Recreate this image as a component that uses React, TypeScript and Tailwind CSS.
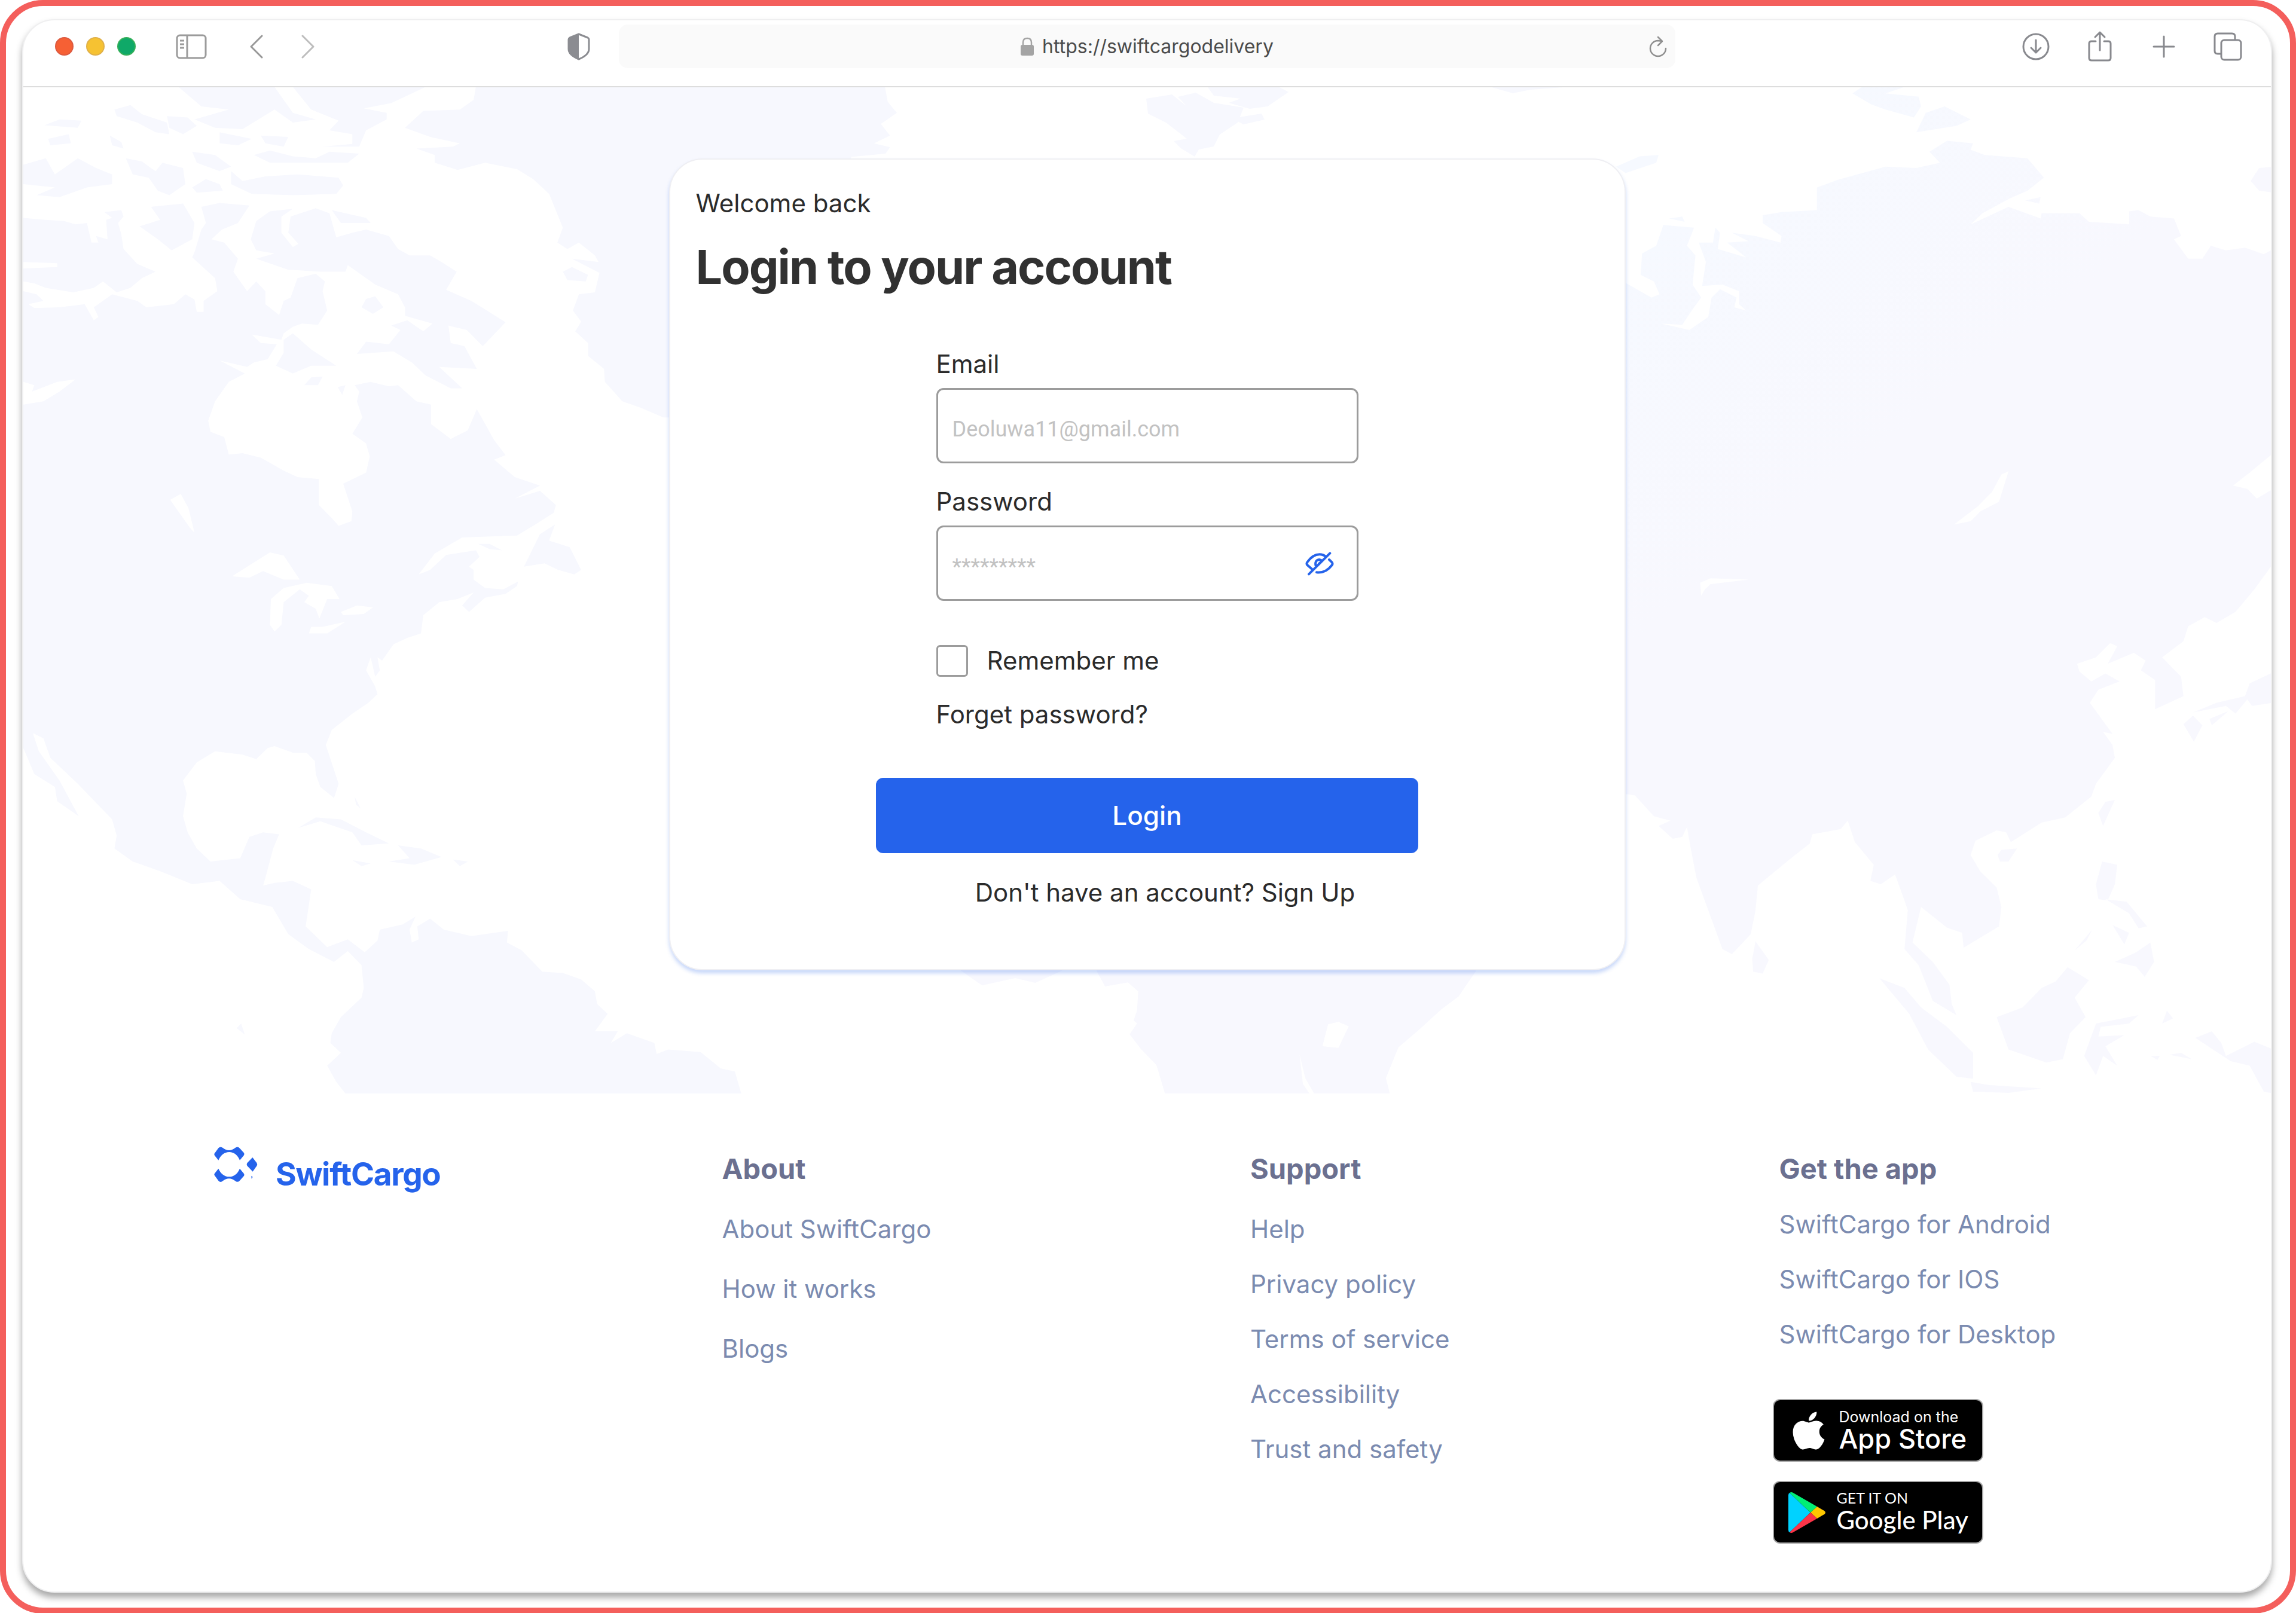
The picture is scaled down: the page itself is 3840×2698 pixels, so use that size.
import { useState } from "react";
import type { ReactNode } from "react";
import { FaApple } from "react-icons/fa";

type LinkColumn = {
  title: string;
  links: string[];
};

const aboutColumn: LinkColumn = {
  title: "About",
  links: ["About SwiftCargo", "How it works", "Blogs"],
};

const supportColumn: LinkColumn = {
  title: "Support",
  links: [
    "Help",
    "Privacy policy",
    "Terms of service",
    "Accessibility",
    "Trust and safety",
  ],
};

const appColumn: LinkColumn = {
  title: "Get the app",
  links: [
    "SwiftCargo for Android",
    "SwiftCargo for IOS",
    "SwiftCargo for Desktop",
  ],
};

function WorldMap() {
  return (
    <svg
      aria-hidden="true"
      viewBox="39 146 3759 1683"
      preserveAspectRatio="xMidYMid slice"
      className="absolute inset-0 h-full w-full"
    >
      <defs>
        <linearGradient
          id="asia"
          gradientUnits="userSpaceOnUse"
          x1="150"
          y1="250"
          x2="420"
          y2="720"
        >
          <stop offset="0" stopColor="#f6f9ff" />
          <stop offset="1" stopColor="#f8f8fe" />
        </linearGradient>
      </defs>

      {/* Americas and Greenland */}
      <g
        transform="translate(0 140) scale(.7653 1.0842)"
        fill="#f7f8fe"
        fillRule="evenodd"
      >
        <path
          d="M51 320 80 325 95 335 62 340 75 346 130 345 185 340 205 365 215 360 205 345 245 325 300 335 320 345 380 340 405 325 425 333 430 352 445 352 445 335 475 320 470 300 420 268 425 260 440 225 450 215 440 190 480 184 545 188 520 215 485 225 462 240 490 245 520 270 510 290 540 320 560 305 580 320 580 340 610 357 620 335 635 330 650 300 690 293 710 305 705 320 715 350 695 372 660 370 640 375 620 385 615 395 550 387 570 400 605 402 585 425 555 430 540 437 480 427 535 447 500 460 470 490 455 520 460 537 490 545 500 572 530 570 570 577 620 597 650 607 697 610 697 650 725 670 740 682 768 675 770 660 750 617 800 600 808 575 800 555 770 540 792 515 780 490 785 475 775 465 810 460 850 467 870 465 910 490 942 495 942 525 985 548 1022 535 1042 502 1080 550 1105 573 1080 580 1125 607 1180 620 1125 640 1180 628 1215 650 1210 662 1170 680 1130 697 1010 700 950 725 915 757 940 750 975 727 1040 720 1048 730 1025 745 1035 750 1035 765 1060 778 1100 780 1132 768 1130 775 1105 787 1060 793 1025 815 1010 805 1035 785 1000 795 960 800 925 820 920 848 890 855 860 865 835 890 825 885 830 905 820 915 810 885 800 905 820 930 825 942 805 955 770 972 725 997 712 1020 740 1080 730 1102 700 1085 690 1065 688 1045 670 1032 640 1032 600 1022 585 1025 560 1042 530 1035 470 1030 430 1047 400 1075 408 1095 400 1130 410 1155 430 1180 460 1200 525 1195 545 1162 575 1155 610 1158 597 1180 580 1225 575 1237 600 1233 640 1230 680 1243 668 1300 715 1332 760 1320 797 1340 825 1322 830 1305 880 1297 908 1285 895 1305 900 1325 915 1320 912 1300 940 1288 970 1305 1030 1315 1110 1307 1108 1325 1140 1337 1185 1370 1230 1372 1270 1382 1300 1400 1305 1420 1328 1435 1300 1462 1350 1462 1335 1480 1370 1465 1430 1480 1435 1497 1460 1490 1531 1494 1575 1519 1606 1524 1620 1558 755 1558 735 1540 715 1515 745 1495 722 1480 725 1465 745 1440 790 1410 795 1395 790 1360 760 1338 730 1355 675 1335 630 1312 595 1270 525 1258 480 1230 420 1235 350 1215 290 1200 250 1180 255 1160 245 1135 170 1080 110 1040 95 1010 72 1002 85 1030 130 1075 172 1130 125 1107 120 1085 75 1065 51 1025Z
          M51 460 75 465 70 475 125 460 165 456 130 475 95 490 51 495Z
          M372 642 395 633 412 655 425 693 415 685 385 655Z
          M507 760 545 743 590 723 620 728 655 765 620 765 575 752 545 762Z
          M590 835 592 795 620 778 670 770 725 775 742 795 715 795 698 825 690 810 665 800 675 790 655 780 620 800 615 835 600 845Z
          M745 815 780 805 815 808 795 818 750 820Z
          M675 848 680 838 705 838 755 830 715 848Z"
        />
        <path d="M51 207 100 210 140 212 165 217 190 215 200 245 215 245 210 235 235 240 232 210 245 207 228 198 265 195 270 205 258 215 265 232 270 255 300 278 340 290 310 300 285 315 255 322 225 305 205 315 160 322 100 315 75 308 51 305 51 285 125 283 125 277 51 275Z" />
        <path d="M1040 5 1035 25 1005 40 925 42 885 68 940 82 1005 92 990 97 910 100 950 110 950 122 1000 133 1060 122 1130 132 1165 147 1200 170 1230 222 1218 245 1240 255 1265 245 1300 265 1308 275 1250 270 1310 292 1300 322 1265 325 1252 350 1270 367 1257 382 1285 400 1285 420 1320 440 1322 460 1360 490 1400 500 1450 515 1600 515 1860 300 1860 113 1935 108 1945 98 1910 92 1945 80 1925 62 1960 45 1940 28 1934 5Z" />
        <path d="M548 240 560 212 590 197 640 193 615 205 615 230 640 252 652 247 630 230 635 205 690 192 720 200 735 237 770 230 800 225 850 235 870 255 895 265 940 265 965 275 998 290 975 318 1030 335 1105 368 1055 405 1020 380 980 373 985 400 1015 405 1042 440 960 437 1010 470 985 470 930 450 900 430 860 413 780 417 800 398 850 402 875 380 855 373 890 365 925 382 945 370 885 358 885 345 870 325 820 310 760 280 755 290 700 290 630 287 560 270 600 262 560 257Z" />
        <path
          d="M725 195 800 207 810 215 745 215Z
          M505 135 530 150 580 143 650 140 740 145 750 157 735 170 640 172 550 170 505 155Z
          M420 160 450 147 480 155 487 165 430 168Z
          M420 105 470 110 505 128 480 135 430 122Z
          M555 110 590 103 640 112 690 115 720 105 785 108 760 122 640 122 590 122Z
          M640 5 930 5 855 30 795 38 845 45 845 55 800 72 785 97 705 97 770 93 770 78 720 72 740 57 680 40Z
          M390 5 600 5 640 45 690 55 640 60 600 40 530 70 470 68 425 55 500 40 440 35Z
          M250 40 285 33 310 47 365 60 370 78 340 75 300 60 255 50Z
          M365 50 410 52 430 65 400 78 370 68Z
          M240 80 265 90 270 100 245 95Z
          M97 64 130 55 178 57 170 68Z
          M105 85 150 78 155 92 110 95Z
          M51 125 100 115 120 140 170 115 210 130 245 140 245 155 190 160 130 175 80 172 120 160 51 155Z
          M275 115 310 120 340 135 355 122 400 130 405 155 370 172 345 165 325 145 290 140Z
          M305 220 350 210 330 190 400 185 425 215 420 240 375 257 345 240Z
          M480 75 550 85 520 95 480 92Z
          M570 80 630 82 620 97 580 92Z
          M790 345 800 332 820 328 838 345 815 355Z
          M1230 290 1250 283 1285 295 1280 305 1240 303Z
          M603 435 620 415 620 395 640 385 680 410 735 435 680 435 640 447Z
          M665 465 680 453 705 452 695 465Z
          M738 468 755 465 748 480Z
          M1145 745 1180 695 1213 680 1200 705 1245 715 1270 750 1255 757 1220 750 1190 740Z
          M1045 710 1070 710 1097 720 1070 718Z
          M652 1148 690 1132 745 1135 800 1155 850 1172 790 1175 770 1155 700 1138Z
          M870 1175 920 1180 965 1193 905 1205 850 1200 895 1195Z
          M770 1198 810 1203 790 1207Z
          M990 1197 1023 1200 1005 1207Z
          M517 1457 527 1450 535 1467Z
          M775 1100 788 1118 778 1112Z"
        />
      </g>

      {/* Arctic islands */}
      <path
        fill="#f7f8fe"
        d="M2020 146H2140L2155 154 2120 178 2090 182 2055 172 2075 165 2030 160Z
        M1917 165 1960 158 1985 178 1970 162 2000 155 2030 172 2080 180 2070 205 2040 225 2030 245 2005 250 1998 262 1975 248 1963 236 1985 232 1950 205 1920 190Z
        M2060 198 2110 190 2115 200 2080 208Z
        M2495 146H2615L2560 150 2530 156Z"
      />

      {/* Africa */}
      <path
        transform="translate(1100 1600) scale(.9567 .3333)"
        fill="#f8f8fe"
        fillRule="evenodd"
        d="M765 60 782 150 822 130 840 175 838 270 832 320 838 335 825 390 845 465 872 545 887 690 1140 690 1128 640 1122 490 1132 610 1148 690 1280 690 1273 610 1295 455 1330 370 1370 265 1400 200 1430 75 1430 60Z
        M1162 450 1172 340 1190 328 1208 350 1190 458Z
        M525 60 567 145 625 108 660 132 715 60Z"
      />

      {/* Asia */}
      <g
        transform="translate(2600 140) scale(.7908 1.0842)"
        fill="url(#asia)"
        fillRule="evenodd"
      >
        <path
          d="M0 290 152 308 205 330 222 325 210 305 182 295 185 262 215 250 230 218 295 222 280 250 298 265 292 310 310 330 290 350 270 372 225 370 285 380 325 360 332 330 350 317 385 330 380 345 405 350 390 340 390 320 355 310 312 312 320 275 305 245 335 245 340 222 350 230 345 255 405 268 365 245 410 243 375 230 425 235 478 245 480 235 440 215 440 203 480 198 555 195 555 160 600 148 700 128 765 130 815 122 793 105 830 88 885 92 880 102 910 110 1000 115 1035 145 1000 165 960 178 905 200 880 217 960 190 1028 208 1030 200 1110 200 1130 213 1215 217 1215 197 1235 195 1260 205 1310 208 1325 235 1310 240 1340 270 1370 270 1388 250 1420 257 1460 253 1500 263 1520 255 1520 570 1470 600 1435 620 1465 625 1485 640 1520 625 1520 740 1480 780 1440 815 1400 832 1375 823 1340 837 1330 860 1285 885 1325 915 1330 945 1270 965 1270 920 1240 905 1250 890 1225 878 1170 895 1190 868 1175 863 1145 885 1105 895 1110 907 1135 922 1165 910 1195 922 1150 935 1132 955 1180 1003 1160 1000 1180 1020 1185 1040 1145 1080 1135 1100 1080 1132 1030 1140 965 1170 955 1155 935 1152 890 1168 880 1190 900 1215 935 1240 945 1270 940 1300 865 1333 862 1310 830 1302 775 1270 757 1325 800 1355 835 1390 840 1420 850 1437 800 1415 770 1360 740 1335 747 1275 735 1250 720 1220 690 1235 668 1230 675 1205 635 1170 620 1137 605 1150 545 1158 540 1172 500 1195 430 1237 425 1275 415 1312 375 1343 355 1335 330 1285 300 1225 288 1180 280 1147 270 1162 250 1165 220 1145 245 1137 210 1130 170 1098 0 1080Z
          M845 680 895 652 925 630 945 603 960 598 940 645 900 660 880 675Z
          M310 790 308 770 330 763 410 765 330 772 318 780Z"
        />
        <path
          d="M630 15 650 5 740 5 700 15 770 20 775 35 760 52 700 40 670 32Z
          M765 75 785 45 825 35 880 55 850 65Z
          M130 128 180 112 220 110 215 122 150 138Z
          M242 208 270 205 275 213Z
          M1472 150 1490 130 1520 128 1520 168 1490 165Z
          M995 180 1028 175 1025 185Z
          M1350 970 1400 955 1460 945 1470 925 1520 908 1520 955 1475 960 1465 950 1440 972 1420 960Z
          M1330 988 1350 975 1370 990 1352 1015Z
          M1385 980 1425 968 1390 990Z
          M1150 1125 1165 1108 1185 1105 1160 1145Z
          M937 1190 945 1182 978 1180 960 1200 942 1200Z
          M418 1350 425 1323 453 1352 440 1373 420 1370Z
          M1145 1235 1158 1200 1190 1205 1185 1235 1170 1260 1150 1258Z
          M1165 1258 1210 1262 1253 1300 1235 1303 1215 1280Z
          M1180 1298 1215 1310 1205 1328Z
          M1185 1355 1230 1340 1260 1325 1268 1355 1248 1378 1230 1362Z
          M1100 1337 1137 1305 1125 1322Z
          M687 1380 740 1395 775 1425 830 1455 885 1495 885 1535 850 1532 790 1490 750 1435Z
          M880 1540 920 1545 1030 1550 960 1557 885 1555Z
          M935 1440 990 1425 1030 1395 1060 1385 1085 1363 1130 1383 1100 1410 1123 1440 1090 1465 1075 1505 1040 1510 960 1490Z
          M1120 1500 1145 1450 1235 1437 1215 1450 1155 1455 1150 1470 1205 1468 1165 1485 1190 1515 1160 1500 1145 1530Z
          M1355 1472 1390 1462 1410 1480 1420 1500 1480 1478 1520 1490 1520 1558 1500 1555 1470 1515 1430 1508Z
          M1285 1450 1295 1430 1308 1442Z
          M1260 1500 1280 1500 1275 1506Z
          M1300 1498 1325 1495 1348 1505Z"
        />
      </g>
    </svg>
  );
}

function ToolbarButton({
  label,
  children,
}: {
  label: string;
  children: ReactNode;
}) {
  return (
    <button
      type="button"
      aria-label={label}
      className="flex min-w-6 cursor-pointer justify-center"
    >
      {children}
    </button>
  );
}

function BrowserToolbar() {
  return (
    <header className="grid h-28 grid-cols-[1fr_47%_1fr] items-start border-b-2 border-[#dddddd] pt-[7px]">
      <div className="flex h-[73px] items-center pr-12 pl-[53px]">
        <div className="flex gap-[21px]">
          <span className="size-[31px] rounded-full border-2 border-[#dc5a40] bg-[#f66034]" />
          <span className="size-[31px] rounded-full border-2 border-[#dfb04a] bg-[#f6c232]" />
          <span className="size-[31px] rounded-full border-2 border-[#37b05a] bg-[#0fa968]" />
        </div>
        <div className="ml-[67px] flex items-center">
          <ToolbarButton label="Show sidebar">
            <svg
              width="52"
              height="42"
              viewBox="0 0 52 42"
              fill="none"
              stroke="#9b9b9b"
              strokeWidth="3"
            >
              <rect x="2" y="2" width="48" height="38" rx="5" />
              <path d="M19 2v38M7 11h7M7 17h7M7 23h7" />
            </svg>
          </ToolbarButton>
          <div className="ml-[71px] flex gap-[62px]">
            <ToolbarButton label="Back">
              <svg
                width="22"
                height="40"
                viewBox="0 0 22 40"
                fill="none"
                stroke="#999999"
                strokeWidth="3"
                strokeLinecap="round"
                strokeLinejoin="round"
              >
                <path d="M20 2 2 20l18 18" />
              </svg>
            </ToolbarButton>
            <ToolbarButton label="Forward">
              <svg
                width="22"
                height="40"
                viewBox="0 0 22 40"
                fill="none"
                stroke="#bdbdbd"
                strokeWidth="3"
                strokeLinecap="round"
                strokeLinejoin="round"
              >
                <path d="m2 2 18 18L2 38" />
              </svg>
            </ToolbarButton>
          </div>
        </div>
        <div className="ml-auto flex">
          <ToolbarButton label="Privacy report">
            <svg width="38" height="46" viewBox="0 0 38 46">
              <path
                d="M19 2 34 8q2 1 2 3v16q0 10-17 17Q2 37 2 27V11q0-2 2-3Z"
                fill="none"
                stroke="#8b8c91"
                strokeWidth="3"
                strokeLinejoin="round"
              />
              <path d="M19 2v42Q2 37 2 27V11q0-2 2-3Z" fill="#8b8c91" />
            </svg>
          </ToolbarButton>
        </div>
      </div>

      <div className="grid h-[73px] grid-cols-[1fr_auto_1fr] items-center rounded-[15px] bg-[#fafafa]">
        <div className="col-start-2 flex items-center gap-[14px]">
          <svg width="22" height="32" viewBox="0 0 22 32">
            <rect y="13" width="22" height="18" rx="3" fill="#a4a4a4" />
            <path
              d="M4 14V9q0-7 7-7t7 7v5"
              fill="none"
              stroke="#a4a4a4"
              strokeWidth="2.5"
            />
          </svg>
          <input
            aria-label="Address"
            defaultValue="https://swiftcargodelivery"
            className="field-sizing-content bg-transparent text-[32px] leading-10 text-[#4b4b4b] outline-none"
          />
        </div>
        <div className="flex justify-end pr-[14px]">
          <ToolbarButton label="Reload">
            <svg
              width="30"
              height="36"
              viewBox="0 0 30 36"
              fill="none"
              stroke="#8f8f8f"
              strokeWidth="2.5"
              strokeLinecap="round"
              strokeLinejoin="round"
            >
              <path d="M28 21a13 13 0 1 1-13-13l7 1M15 2l7 7-7 7" />
            </svg>
          </ToolbarButton>
        </div>
      </div>

      <div className="grid h-[73px] grid-cols-[48px_48px_48px_48px] items-center justify-end gap-[59px] pr-12">
        <ToolbarButton label="Downloads">
          <svg
            width="46"
            height="46"
            viewBox="0 0 46 46"
            fill="none"
            stroke="#88898e"
            strokeWidth="3"
            strokeLinecap="round"
            strokeLinejoin="round"
          >
            <circle cx="23" cy="23" r="21" />
            <path d="M23 12v21m-8-8 8 8 8-8" />
          </svg>
        </ToolbarButton>
        <ToolbarButton label="Share">
          <svg
            width="40"
            height="54"
            viewBox="0 0 40 54"
            fill="none"
            stroke="#88898e"
            strokeWidth="3"
            strokeLinecap="round"
            strokeLinejoin="round"
          >
            <path d="M13 18H6q-4 0-4 4v24q0 4 4 4h28q4 0 4-4V22q0-4-4-4h-7M20 33V3m-8 8 8-8 8 8" />
          </svg>
        </ToolbarButton>
        <ToolbarButton label="New tab">
          <svg
            width="38"
            height="38"
            viewBox="0 0 38 38"
            fill="none"
            stroke="#88898e"
            strokeWidth="3"
            strokeLinecap="round"
          >
            <path d="M19 2v34M2 19h34" />
          </svg>
        </ToolbarButton>
        <ToolbarButton label="Tab overview">
          <svg
            width="48"
            height="48"
            viewBox="0 0 48 48"
            fill="none"
            stroke="#88898e"
            strokeWidth="3"
            strokeLinejoin="round"
          >
            <rect x="13" y="13" width="33" height="33" rx="5" />
            <path d="M12 36H7q-5 0-5-5V7q0-5 5-5h24q5 0 5 5v5" />
          </svg>
        </ToolbarButton>
      </div>
    </header>
  );
}

function LoginCard() {
  const [showPassword, setShowPassword] = useState(false);

  return (
    <div className="relative w-[1600px] max-w-full rounded-[56px] border-2 border-[#efeff3] bg-white px-[43px] pt-[45px] pb-[100px] text-[42px] leading-[56px] text-[#2b2b2b] shadow-[0_5px_6px_rgba(37,99,235,0.25)]">
      <p>Welcome back</p>
      <h1 className="mt-[30px] text-[79px] leading-[96px] font-bold tracking-tight text-[#313131]">
        Login to your account
      </h1>

      <form
        className="mt-[87px] flex flex-col items-center"
        onSubmit={(e) => e.preventDefault()}
      >
        <div className="flex w-[706px] flex-col">
          <label htmlFor="email">Email</label>
          <input
            id="email"
            type="email"
            placeholder="Deoluwa11@gmail.com"
            className="mt-3 h-[126px] rounded-xl border-3 border-[#9c9c9c] bg-white px-6 pt-3 font-['Roboto',sans-serif] text-[36px] outline-none placeholder:text-[#c2c2c2]"
          />

          <label htmlFor="password" className="mt-9">
            Password
          </label>
          <div className="mt-3 flex h-[126px] items-center rounded-xl border-3 border-[#9c9c9c] bg-white pr-[38px] pl-6">
            <input
              id="password"
              type={showPassword ? "text" : "password"}
              placeholder="*********"
              className="min-w-0 flex-1 bg-transparent pt-3 font-['Roboto',sans-serif] text-[36px] outline-none placeholder:text-[#c2c2c2]"
            />
            <button
              type="button"
              aria-label="Toggle password visibility"
              onClick={() => setShowPassword(!showPassword)}
              className="cursor-pointer"
            >
              <svg
                width="48"
                height="41"
                viewBox="-2 -2 144 123"
                fill="none"
                stroke="#2563eb"
                strokeWidth="12"
                strokeLinecap="round"
                strokeLinejoin="round"
              >
                <path d="M32 88 8 67q-5-7 0-14Q36 14 70 14q18 0 32 12" />
                <path d="m118 40 14 14q5 7 0 14-32 42-77 36" />
                <path d="M50 68Q46 42 70 40l10 4M66 62l6-6" />
                <path d="M122 8 16 113" />
              </svg>
            </button>
          </div>

          <label className="mt-[72px] flex items-center gap-8">
            <input
              type="checkbox"
              className="size-[53px] appearance-none rounded-md border-3 border-[#9c9c9c] bg-white checked:bg-[#2563eb]"
            />
            Remember me
          </label>
          <a href="#forgot" className="mt-[34px] self-start">
            Forget password?
          </a>
        </div>

        <button
          type="submit"
          className="mt-[78px] h-[126px] w-[907px] cursor-pointer rounded-xl bg-[#2563eb] text-[44px] font-medium text-white"
        >
          Login
        </button>
        <p className="mt-[38px] pl-[60px]">
          Don't have an account? <a href="#signup">Sign Up</a>
        </p>
      </form>
    </div>
  );
}

function Logo() {
  return (
    <a href="#home" className="flex items-start gap-[30px]">
      <svg width="73" height="62" viewBox="0 0 219 186" fill="#2563eb">
        <path d="M3 36 22 10Q32-1 44 9q31 24 62 0 12-10 23 2l20 22q5 7 0 14l-20 24Q112 31 76 30 40 31 22 71L3 47q-4-6 0-11Z" />
        <path d="M3 148l19 26q10 11 22 1 31-24 62 0 12 10 23-2l20-22q5-7 0-14l-20-24q-17 40-53 41-36-1-54-41L3 137q-4 6 0 11Z" />
        <path d="m193 57 21 27q5 8 0 16l-20 28-27-28q-6-8 0-16Z" />
        <path d="m187 149 7 6-6 9Z" />
      </svg>
      <span className="mt-[15px] text-[53px] leading-[64px] font-bold tracking-tight text-[#2563eb]">
        SwiftCargo
      </span>
    </a>
  );
}

function StoreBadge({
  caption,
  name,
  icon,
  className,
}: {
  caption: string;
  name: string;
  icon: ReactNode;
  className: string;
}) {
  return (
    <a
      href="#download"
      className="flex h-[105px] w-[352px] items-center rounded-xl border-2 border-[#a6a6a6] bg-black pl-6 text-white"
    >
      <span className="flex w-[80px] shrink-0">{icon}</span>
      <span className={className}>
        <span className="block text-[25px] leading-7">{caption}</span>
        <span className="block leading-[46px] font-medium whitespace-nowrap">
          {name}
        </span>
      </span>
    </a>
  );
}

function PlayIcon() {
  return (
    <svg width="64" height="70" viewBox="0 0 64 70">
      <path d="M2 2Q0 3 0 6v58q0 3 2 4l35-33Z" fill="#00d2ff" />
      <path d="M2 2q3-2 6 0l40 23-11 10Z" fill="#00ee76" />
      <path d="m48 25 12 7q4 3 0 6l-12 7-11-10Z" fill="#ffc800" />
      <path d="m2 68 35-33 11 10L8 68q-3 2-6 0Z" fill="#fb3448" />
    </svg>
  );
}

function ColumnTitle({ children }: { children: ReactNode }) {
  return (
    <h2 className="text-[47px] leading-[60px] font-bold text-[#6b7090]">
      {children}
    </h2>
  );
}

function SiteFooter() {
  return (
    <footer className="grid grid-cols-[850fr_884fr_885fr_823fr] pt-[88px] pb-20 pl-[319px] text-[42px] leading-[56px] text-[#7b8bb0]">
      <Logo />

      <nav className="pt-2">
        <ColumnTitle>{aboutColumn.title}</ColumnTitle>
        <ul className="mt-[43px] flex flex-col gap-11">
          {aboutColumn.links.map((link) => (
            <li key={link}>
              <a href="#about">{link}</a>
            </li>
          ))}
        </ul>
      </nav>

      <nav className="pt-2">
        <ColumnTitle>{supportColumn.title}</ColumnTitle>
        <ul className="mt-[43px] flex flex-col gap-9">
          {supportColumn.links.map((link) => (
            <li key={link}>
              <a href="#support">{link}</a>
            </li>
          ))}
        </ul>
      </nav>

      <nav className="pt-2">
        <ColumnTitle>{appColumn.title}</ColumnTitle>
        <ul className="mt-[35px] flex flex-col gap-9">
          {appColumn.links.map((link) => (
            <li key={link}>
              <a href="#app">{link}</a>
            </li>
          ))}
        </ul>
        <div className="mt-20 -ml-[10px] flex flex-col gap-8">
          <StoreBadge
            caption="Download on the"
            name="App Store"
            className="pl-1 text-[45px]"
            icon={<FaApple className="ml-1 h-[72px] w-[60px]" />}
          />
          <StoreBadge
            caption="GET IT ON"
            name="Google Play"
            className="pb-1 font-['Lato',sans-serif] text-[42px]"
            icon={<PlayIcon />}
          />
        </div>
      </nav>
    </footer>
  );
}

export default function App() {
  return (
    <div className="min-h-screen rounded-[72px] border-10 border-[#f45f5c] bg-white pt-[22px] pr-[30px] pb-[25px] pl-[27px] font-['Inter',sans-serif]">
      <div className="overflow-hidden rounded-[54px] border-2 border-[#efeff0] bg-white shadow-[0_8px_12px_rgba(0,0,0,0.35)]">
        <BrowserToolbar />
        <main className="relative flex justify-center overflow-hidden pt-[119px] pb-[206px]">
          <WorldMap />
          <LoginCard />
        </main>
        <SiteFooter />
      </div>
    </div>
  );
}
